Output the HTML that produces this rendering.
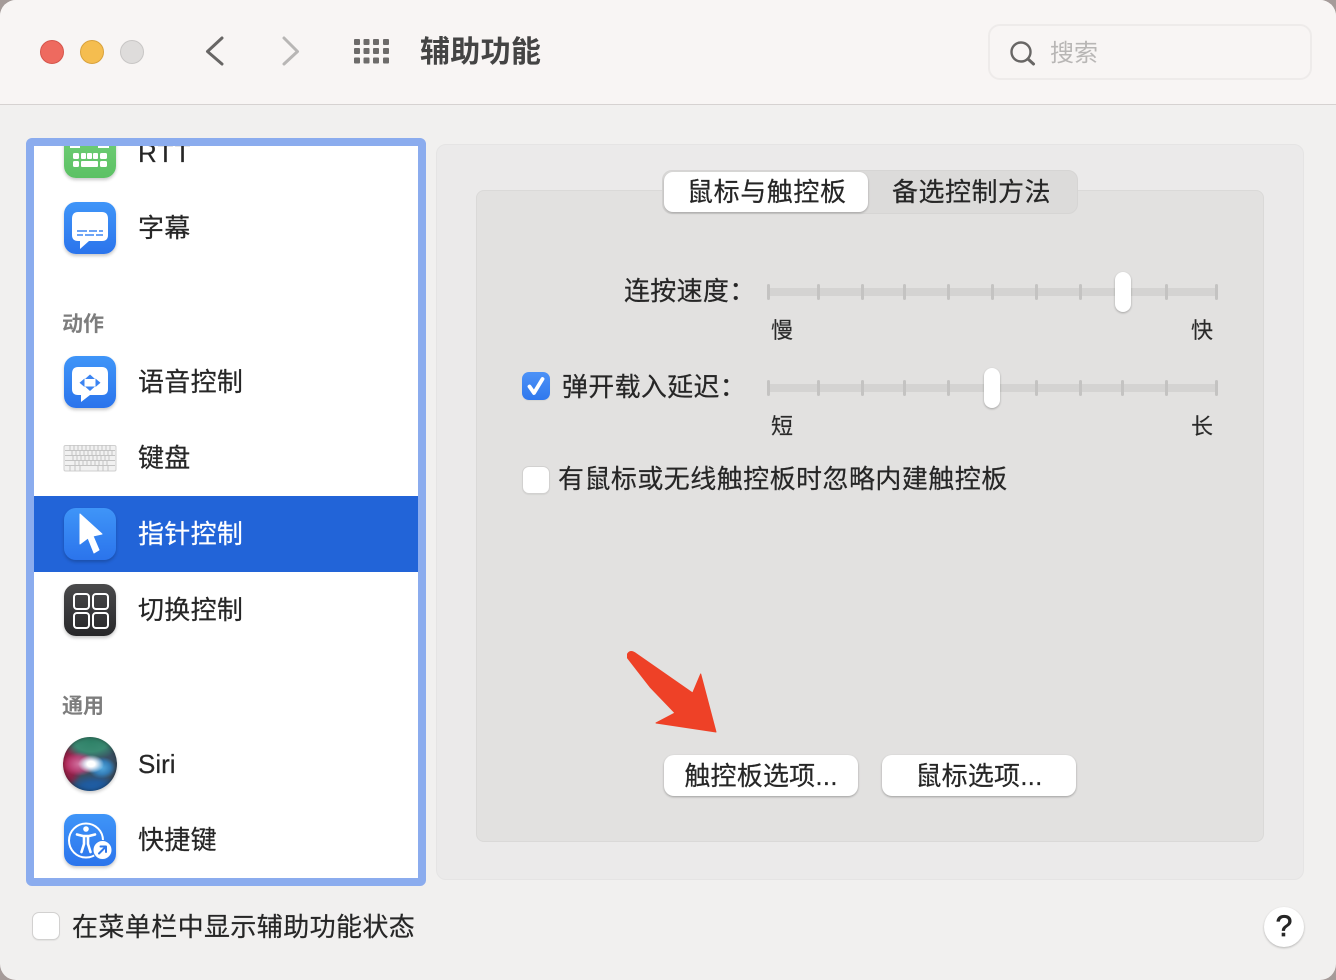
<!DOCTYPE html>
<html lang="zh">
<head>
<meta charset="utf-8">
<title>辅助功能</title>
<style>
html,body{margin:0;padding:0;width:1336px;height:980px;overflow:hidden;background:#a59b99;}
body{position:relative;font-family:"Liberation Sans","Noto Sans CJK SC",sans-serif;color:#262626;}
div,svg{position:absolute;box-sizing:border-box;}
.t{white-space:nowrap;font-size:26px;line-height:36px;height:36px;letter-spacing:.3px;-webkit-text-stroke:.2px currentColor;}
.ic{left:64px;width:52px;height:52px;border-radius:12px;background:linear-gradient(#3f95f8,#2b74ec);box-shadow:0 2px 3px rgba(0,0,0,.22);}
.tick{width:3px;height:16px;background:#c4c3c2;border-radius:1.5px;}
.track{height:8px;left:768px;width:450px;background:#d4d3d2;}
.thumb{width:16px;height:40px;border-radius:8px;background:#fff;box-shadow:0 1px 2px rgba(0,0,0,.28);}
.s{font-size:22px;line-height:30px;height:30px;white-space:nowrap;color:#2a2a2a;-webkit-text-stroke:.15px currentColor;}
.cb{width:28px;height:28px;border-radius:7px;background:#fff;border:1px solid #d2d1d0;box-shadow:0 1px 1px rgba(0,0,0,.06);}
.btn{height:41px;width:194px;top:755px;background:#fff;border-radius:10px;box-shadow:0 1px 2px rgba(0,0,0,.3);text-align:center;font-size:26px;line-height:42px;letter-spacing:.2px;color:#262626;white-space:nowrap;-webkit-text-stroke:.2px currentColor;}
.hd{font-size:21px;line-height:30px;height:30px;color:#7d7d7d;font-weight:700;white-space:nowrap;}
</style>
</head>
<body>
<div id="win" style="left:0;top:0;width:1336px;height:980px;border-radius:16px;background:#f1f0ef;overflow:hidden;">
  <div style="left:0;top:0;width:1336px;height:105px;background:#f8f5f4;border-bottom:1px solid #d6d2d1;"></div>

  <div style="left:40px;top:40px;width:24px;height:24px;border-radius:50%;background:#ee6a5f;border:1px solid #d5554b;"></div>
  <div style="left:80px;top:40px;width:24px;height:24px;border-radius:50%;background:#f5bd4f;border:1px solid #d9a23c;"></div>
  <div style="left:120px;top:40px;width:24px;height:24px;border-radius:50%;background:#dedcdb;border:1px solid #c8c6c5;"></div>

  <svg style="left:200px;top:30px;" width="110" height="42" viewBox="0 0 110 42" fill="none">
    <path d="M22 8 L7.500 21.500 L22 34" stroke="#686665" stroke-width="3" stroke-linecap="round" stroke-linejoin="round"/>
    <path d="M84 8 L97.500 21.500 L84 34" stroke="#b8b6b5" stroke-width="3" stroke-linecap="round" stroke-linejoin="round"/>
  </svg>
  <svg style="left:352px;top:38px;" width="40" height="30" viewBox="0 0 40 30" fill="#6d6b6a">
    <rect x="2" y="1" width="6" height="6" rx="1"/><rect x="11.500" y="1" width="6" height="6" rx="1"/><rect x="21" y="1" width="6" height="6" rx="1"/><rect x="31" y="1" width="6" height="6" rx="1"/>
    <rect x="2" y="10" width="6" height="6" rx="1"/><rect x="11.500" y="10" width="6" height="6" rx="1"/><rect x="21" y="10" width="6" height="6" rx="1"/><rect x="31" y="10" width="6" height="6" rx="1"/>
    <rect x="2" y="19.500" width="6" height="6" rx="1"/><rect x="11.500" y="19.500" width="6" height="6" rx="1"/><rect x="21" y="19.500" width="6" height="6" rx="1"/><rect x="31" y="19.500" width="6" height="6" rx="1"/>
  </svg>
  <div class="t" style="left:420px;top:32px;font-size:30px;line-height:42px;height:42px;font-weight:700;color:#444;-webkit-text-stroke:0;">辅助功能</div>

  <div style="left:988px;top:24px;width:324px;height:56px;border-radius:12px;border:2px solid #eeebea;"></div>
  <svg style="left:1006px;top:36px;" width="34" height="32" viewBox="0 0 34 32" fill="none">
    <circle cx="15" cy="16" r="9.500" stroke="#686665" stroke-width="2.400"/>
    <path d="M22 23 L27.500 28" stroke="#686665" stroke-width="3" stroke-linecap="round"/>
  </svg>
  <div class="t" style="left:1050px;top:36px;font-size:24px;color:#b8b6b5;letter-spacing:0;-webkit-text-stroke:0;">搜索</div>

  <!-- sidebar -->
  <div style="left:26px;top:138px;width:400px;height:748px;border:8px solid #8bacee;border-radius:6px;background:#fff;"></div>
  <div style="left:34px;top:146px;width:384px;height:732px;overflow:hidden;">
    <div style="left:0;top:350px;width:384px;height:76px;background:#2264d8;"></div>
    <div class="t" style="left:104px;top:-11px;letter-spacing:1.200px;">RTT</div>
    <div class="t" style="left:104px;top:64px;">字幕</div>
    <div class="hd" style="left:28px;top:164px;">动作</div>
    <div class="t" style="left:104px;top:218px;">语音控制</div>
    <div class="t" style="left:104px;top:294px;">键盘</div>
    <div class="t" style="left:104px;top:370px;color:#fff;">指针控制</div>
    <div class="t" style="left:104px;top:446px;">切换控制</div>
    <div class="hd" style="left:28px;top:546px;">通用</div>
    <div class="t" style="left:104px;top:600px;letter-spacing:0;">Siri</div>
    <div class="t" style="left:104px;top:676px;">快捷键</div>
  </div>

  <!-- icons -->
  <div style="left:60px;top:146px;width:60px;height:40px;overflow:hidden;">
    <div class="ic" style="left:4px;top:-20px;background:linear-gradient(#74d07a,#5cc164);">
      <svg style="left:8px;top:20px;" width="36" height="32" viewBox="0 0 36 32" fill="#fff">
        <rect x="1" y="7" width="6" height="6" rx="1.500"/><rect x="9" y="7" width="5" height="6" rx="1"/><rect x="15" y="7" width="5" height="6" rx="1"/><rect x="21" y="7" width="5" height="6" rx="1"/><rect x="28" y="7" width="7" height="6" rx="1.500"/>
        <rect x="1" y="15" width="6" height="6" rx="1.500"/><rect x="9" y="15" width="17" height="6" rx="1"/><rect x="28" y="15" width="7" height="6" rx="1.500"/>
      </svg>
      <svg style="left:0;top:20px;" width="52" height="3" viewBox="0 0 52 3" fill="#fff"><rect x="6" y="0" width="10" height="2"/><rect x="34" y="0" width="11" height="2"/></svg>
    </div>
  </div>

  <div class="ic" style="top:202px;">
    <svg style="left:0;top:0;" width="52" height="52" viewBox="0 0 52 52">
      <path d="M14 10 H38 Q44 10 44 17 V33 Q44 39 38 39 H25 L16 47 L16 39 H14 Q8 39 8 33 V17 Q8 10 14 10 Z" fill="#fff"/>
      <path d="M13 29 H23 M25 29 H33 M35 29 H39 M13 33 H19 M21 33 H30 M32 33 H39" stroke="#3d86f3" stroke-width="1.500"/>
    </svg>
  </div>

  <div class="ic" style="top:356px;">
    <svg style="left:0;top:0;" width="52" height="52" viewBox="0 0 52 52">
      <path d="M14 11 H38 Q44 11 44 18 V33 Q44 39 38 39 H26 L17 46 L17 39 H14 Q8 39 8 33 V18 Q8 11 14 11 Z" fill="#fff"/>
      <path d="M26 18.500 L31 23 H21 Z M26 35 L31 30.500 H21 Z M15.500 26.800 L20.500 22.500 V31 Z M36.500 26.800 L31.500 22.500 V31 Z" fill="#3b84f2"/>
    </svg>
  </div>

  <svg style="left:62px;top:442px;" width="56" height="34" viewBox="0 0 56 34">
    <rect x="2" y="3.500" width="52" height="25.500" rx="1.500" fill="#f1f1f1" stroke="#cfcfcf"/>
    <g stroke="#c3c3c3" stroke-width="1" fill="none">
      <path d="M3 8.500H53M3 13.500H53M3 18.500H53M3 23.500H53" />
      <path d="M8 3V8M12 3V8M16 3V8M20 3V8M24 3V8M28 3V8M32 3V8M36 3V8M40 3V8M44 3V8M48 3V8"/>
      <path d="M10 8V13M14 8V13M18 8V13M22 8V13M26 8V13M30 8V13M34 8V13M38 8V13M42 8V13M46 8V13M50 8V13"/>
      <path d="M11 13V18M15 13V18M19 13V18M23 13V18M27 13V18M31 13V18M35 13V18M39 13V18M43 13V18M47 13V18"/>
      <path d="M13 18V23M17 18V23M21 18V23M25 18V23M29 18V23M33 18V23M37 18V23M41 18V23M45 18V23"/>
      <path d="M8 23V29M13 23V29M18 23V29M36 23V29M41 23V29M46 23V29"/>
    </g>
  </svg>

  <div class="ic" style="top:508px;">
    <svg style="left:0;top:0;" width="52" height="52" viewBox="0 0 52 52">
      <path d="M16 6 L38 26 L29 28 L35 42 L30 45 L24 30 L16 36 Z" fill="#fff" stroke="#fff" stroke-width="1" stroke-linejoin="round"/>
    </svg>
  </div>

  <div class="ic" style="top:584px;background:linear-gradient(#4a4a4b,#28282a);">
    <svg style="left:0;top:0;" width="52" height="52" viewBox="0 0 52 52" fill="none" stroke="#fff" stroke-width="2">
      <rect x="10" y="10" width="15" height="15" rx="3"/><rect x="29" y="10" width="15" height="15" rx="3"/>
      <rect x="10" y="29" width="15" height="15" rx="3"/><rect x="29" y="29" width="15" height="15" rx="3"/>
    </svg>
  </div>

  <div style="left:63px;top:737px;width:54px;height:54px;border-radius:50%;box-shadow:0 2px 3px rgba(0,0,0,.2),inset 0 0 5px rgba(15,15,15,.55);background:
    radial-gradient(ellipse 13px 9px at 52% 50%,#fff 0,#fff 30%,rgba(225,238,250,.8) 55%,transparent 100%),
    radial-gradient(ellipse 14px 11px at 72% 57%,rgba(85,175,230,.95) 0,rgba(50,140,210,.75) 60%,transparent 100%),
    radial-gradient(ellipse 16px 12px at 30% 50%,rgba(215,120,165,.95) 0,rgba(195,70,125,.8) 60%,transparent 100%),
    radial-gradient(ellipse 30px 19px at 52% 8%,#2f8268 0,#3a8a72 55%,transparent 100%),
    radial-gradient(ellipse 28px 17px at 58% 100%,#1f62ad 0,#205a9c 55%,transparent 100%),
    radial-gradient(ellipse 18px 27px at 4% 50%,#b5234f 0,#8a2148 60%,transparent 100%),
    #3a4f63;"></div>

  <div class="ic" style="top:814px;">
    <svg style="left:0;top:0;" width="52" height="52" viewBox="0 0 52 52" fill="none">
      <circle cx="22" cy="26.500" r="17" stroke="#fff" stroke-width="2"/>
      <circle cx="22" cy="15" r="2.800" fill="#fff"/>
      <path d="M13 20.500 L19 22 H25 L31 20.500 M20 22 V30 L17.500 38 M24 22 V30 L26.500 38" stroke="#fff" stroke-width="2.600" stroke-linecap="round" stroke-linejoin="round"/>
      <circle cx="38.500" cy="36" r="9.500" fill="#fff" stroke="#3480ef" stroke-width="1"/>
      <path d="M35 39.500 L41.500 33 M36.500 32.500 H42 V38" stroke="#2f78ea" stroke-width="2" stroke-linecap="round" stroke-linejoin="round"/>
    </svg>
  </div>

  <!-- main panel -->
  <div style="left:436px;top:144px;width:868px;height:736px;background:#ebeaea;border:1px solid #e5e4e4;border-radius:10px;"></div>
  <div style="left:476px;top:190px;width:788px;height:652px;background:#e2e1e0;border:1px solid #dad9d8;border-radius:8px;"></div>

  <div style="left:662px;top:170px;width:416px;height:44px;background:#dcdbda;border:1px solid #d6d5d4;border-radius:10px;"></div>
  <div style="left:664px;top:172px;width:204px;height:40px;background:#fff;border-radius:9px;box-shadow:0 1px 2px rgba(0,0,0,.28);"></div>
  <div class="t" style="left:687px;top:174px;letter-spacing:.6px;">鼠标与触控板</div>
  <div class="t" style="left:892px;top:174px;letter-spacing:.5px;">备选控制方法</div>

  <div class="t" style="left:624px;top:273px;">连按速度：</div>
  <div class="track" style="top:288px;"></div>
  <div class="tick" style="left:767px;top:284px;"></div><div class="tick" style="left:817px;top:284px;"></div><div class="tick" style="left:861px;top:284px;"></div><div class="tick" style="left:903px;top:284px;"></div><div class="tick" style="left:947px;top:284px;"></div><div class="tick" style="left:991px;top:284px;"></div><div class="tick" style="left:1035px;top:284px;"></div><div class="tick" style="left:1079px;top:284px;"></div><div class="tick" style="left:1165px;top:284px;"></div><div class="tick" style="left:1215px;top:284px;"></div>
  <div class="thumb" style="left:1115px;top:272px;"></div>
  <div class="s" style="left:771px;top:316px;">慢</div>
  <div class="s" style="left:1191px;top:316px;">快</div>

  <div class="cb" style="left:522px;top:372px;background:linear-gradient(#4d92f7,#2f78ed);border:none;">
    <svg style="left:0;top:0;" width="28" height="28" viewBox="0 0 28 28" fill="none"><path d="M7.500 14.500 L12 21 L20.500 7" stroke="#fff" stroke-width="3.800" stroke-linecap="round" stroke-linejoin="round"/></svg>
  </div>
  <div class="t" style="left:562px;top:369px;">弹开载入延迟：</div>
  <div class="track" style="top:384px;"></div>
  <div class="tick" style="left:767px;top:380px;"></div><div class="tick" style="left:817px;top:380px;"></div><div class="tick" style="left:861px;top:380px;"></div><div class="tick" style="left:903px;top:380px;"></div><div class="tick" style="left:947px;top:380px;"></div><div class="tick" style="left:1035px;top:380px;"></div><div class="tick" style="left:1079px;top:380px;"></div><div class="tick" style="left:1121px;top:380px;"></div><div class="tick" style="left:1165px;top:380px;"></div><div class="tick" style="left:1215px;top:380px;"></div>
  <div class="thumb" style="left:984px;top:368px;"></div>
  <div class="s" style="left:771px;top:412px;">短</div>
  <div class="s" style="left:1191px;top:412px;">长</div>

  <div class="cb" style="left:522px;top:466px;"></div>
  <div class="t" style="left:558px;top:461px;font-size:26px;letter-spacing:.45px;">有鼠标或无线触控板时忽略内建触控板</div>

  <svg style="left:620px;top:645px;" width="105" height="95" viewBox="0 0 105 95">
    <path d="M7.500 9 Q10 5 14.500 7.500 L72.700 48 L80.700 29 L96 87 L36 78 L55 68 L30 42 L7.500 13 Z" fill="#ee4127" stroke="#ee4127" stroke-width="1" stroke-linejoin="round"/>
  </svg>

  <div class="btn" style="left:664px;">触控板选项...</div>
  <div class="btn" style="left:882px;">鼠标选项...</div>

  <div class="cb" style="left:32px;top:912px;"></div>
  <div class="t" style="left:72px;top:909px;letter-spacing:.4px;">在菜单栏中显示辅助功能状态</div>

  <div style="left:1264px;top:907px;width:40px;height:40px;border-radius:50%;background:#fff;box-shadow:0 1px 2px rgba(0,0,0,.25);text-align:center;font-size:30px;line-height:40px;color:#262626;-webkit-text-stroke:.7px #262626;font-family:'Liberation Sans',sans-serif;">?</div>
</div>
</body>
</html>
